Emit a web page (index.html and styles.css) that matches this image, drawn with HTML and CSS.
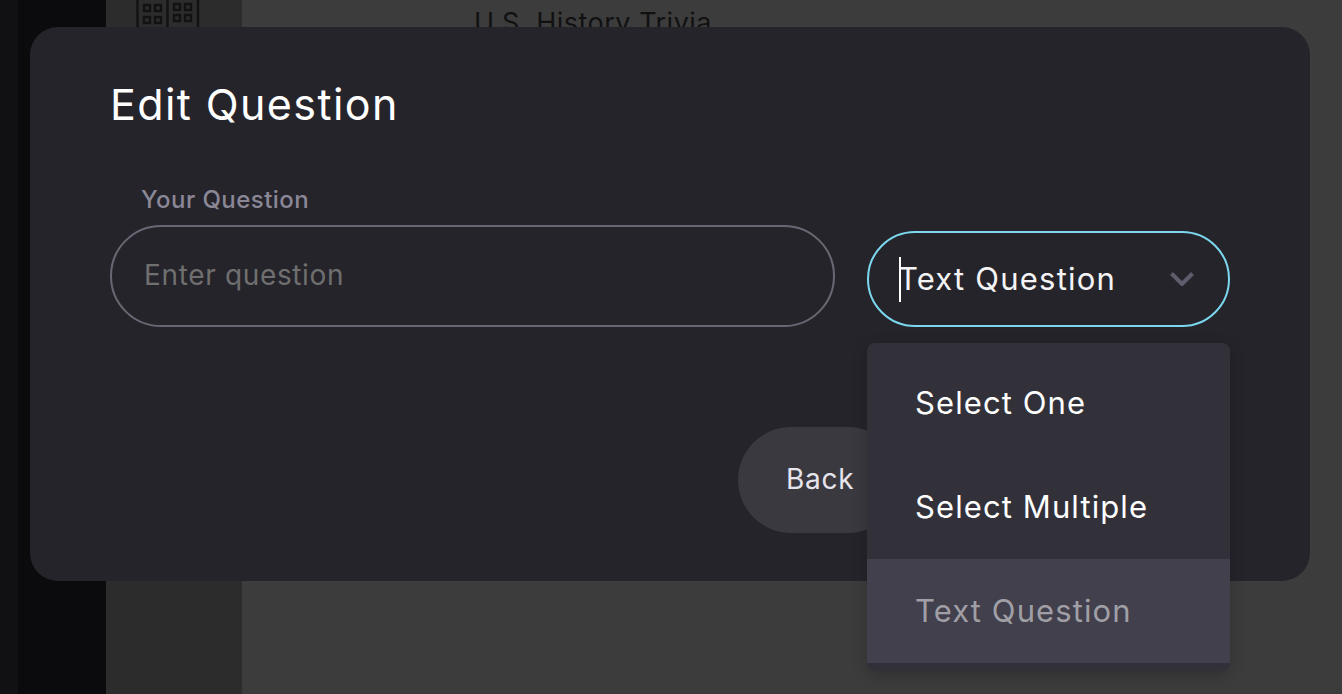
FILE: index.html
```html
<!DOCTYPE html>
<html lang="en">
<head>
<meta charset="utf-8">
<title>Edit Question</title>
<link rel="stylesheet" href="styles.css">
</head>
<body>
<div class="page">
  <div class="rail"></div>
  <div class="nav-dark"></div>
  <div class="sidebar">
    <svg class="side-icon" width="64" height="27" viewBox="0 0 64 27" fill="none" stroke="#121212" stroke-width="2.4">
      <path d="M1.5 0V27M31.5 0V27M62 0V27"/>
      <rect x="8" y="5" width="6" height="6"/><rect x="19" y="5" width="6" height="6"/>
      <rect x="8" y="17" width="6" height="6"/><rect x="19" y="17" width="6" height="6"/>
      <rect x="38" y="4" width="6" height="6"/><rect x="49" y="4" width="6" height="6"/>
      <rect x="38" y="15" width="6" height="6"/><rect x="49" y="15" width="6" height="6"/>
    </svg>
  </div>
  <main class="content"><div class="content-title">U.S. History Trivia</div></main>
</div>
<section class="modal">
  <h1 class="modal-title">Edit Question</h1>
  <div class="form-row">
    <div class="field">
      <label class="field-label">Your Question</label>
      <div class="input"><span class="placeholder">Enter question</span></div>
    </div>
    <div class="select">
      <span class="caret"></span>
      <span class="select-value">Text Question</span>
      <svg class="chevron" width="24" height="14" viewBox="0 0 24 14" fill="none" stroke="#5f5c6b" stroke-width="4"><path d="M1.5 1.5 12 12 22.5 1.5"/></svg>
    </div>
  </div>
  <div class="actions"><div class="back">Back</div></div>
</section>
<div class="menu">
  <div class="menu-item">Select One</div>
  <div class="menu-item">Select Multiple</div>
  <div class="menu-item selected">Text Question</div>
</div>
</body>
</html>
```
FILE: styles.css
```css
* { box-sizing: border-box; }
html, body { margin: 0; height: 100%; overflow: hidden; }
body { font-family: "Inter", "Noto Sans", sans-serif; background: #3c3c3c; color: #fff; position: relative; }
.page { display: flex; height: 694px; }
.rail { width: 18px; background: #111113; }
.nav-dark { width: 88px; background: #0b0b0d; }
.sidebar { width: 136px; background: #2c2c2c; padding-left: 30px; }
.side-icon { display: block; }
.content { flex: 1; background: #3c3c3c; padding: 5px 0 0 232px; }
.content-title { font-size: 27px; line-height: 36px; color: #111; white-space: nowrap; letter-spacing: 0.5px; }
.modal { position: absolute; left: 30px; top: 27px; width: 1280px; height: 554px; background: #26242b; border-radius: 28px; padding: 0 80px; }
.modal-title { margin: 0; padding-top: 48px; font-size: 43px; line-height: 58px; font-weight: 400; height: 107px; letter-spacing: 1.4px; }
.form-row { display: flex; align-items: flex-end; gap: 32px; margin-top: 48px; }
.field { width: 725px; }
.field-label { display: block; padding-left: 31px; font-size: 24px; line-height: 36px; font-weight: 500; color: #8a8796; margin-bottom: 7px; letter-spacing: 0.45px; }
.input { height: 102px; border: 2px solid #6a6774; border-radius: 51px; padding-left: 32px; display: flex; align-items: center; }
.placeholder { font-size: 28px; color: #6f6f6f; position: relative; top: -1px; letter-spacing: 0.65px; }
.select { position: relative; width: 363px; height: 96px; border: 2px solid #7bd8ef; border-radius: 48px; display: flex; align-items: center; justify-content: space-between; padding: 0 34px 0 29px; }
.select-value { font-size: 31px; color: #f4f4f6; letter-spacing: 1.2px; padding-bottom: 2px; }
.caret { position: absolute; left: 30px; top: 24px; width: 2px; height: 45px; background: #fff; }
.chevron { display: block; }
.actions { display: flex; justify-content: flex-end; padding-right: 329px; margin-top: 100px; }
.back { width: 163px; height: 106px; border-radius: 53px; background: #3a393f; display: flex; align-items: center; padding-left: 48px; padding-bottom: 2px; font-size: 28px; color: #e6e4ec; letter-spacing: 0.7px; }
.menu { position: absolute; left: 867px; top: 343px; width: 363px; height: 328px; padding: 8px 0; background: #32313a; border-radius: 8px; box-shadow: 0 4px 16px rgba(0,0,0,.2); }
.menu-item { height: 104px; padding-left: 48px; padding-bottom: 2px; display: flex; align-items: center; font-size: 31px; color: #fff; letter-spacing: 1.1px; }
.menu-item.selected { background: #42404c; color: #a09fa6; }
```
